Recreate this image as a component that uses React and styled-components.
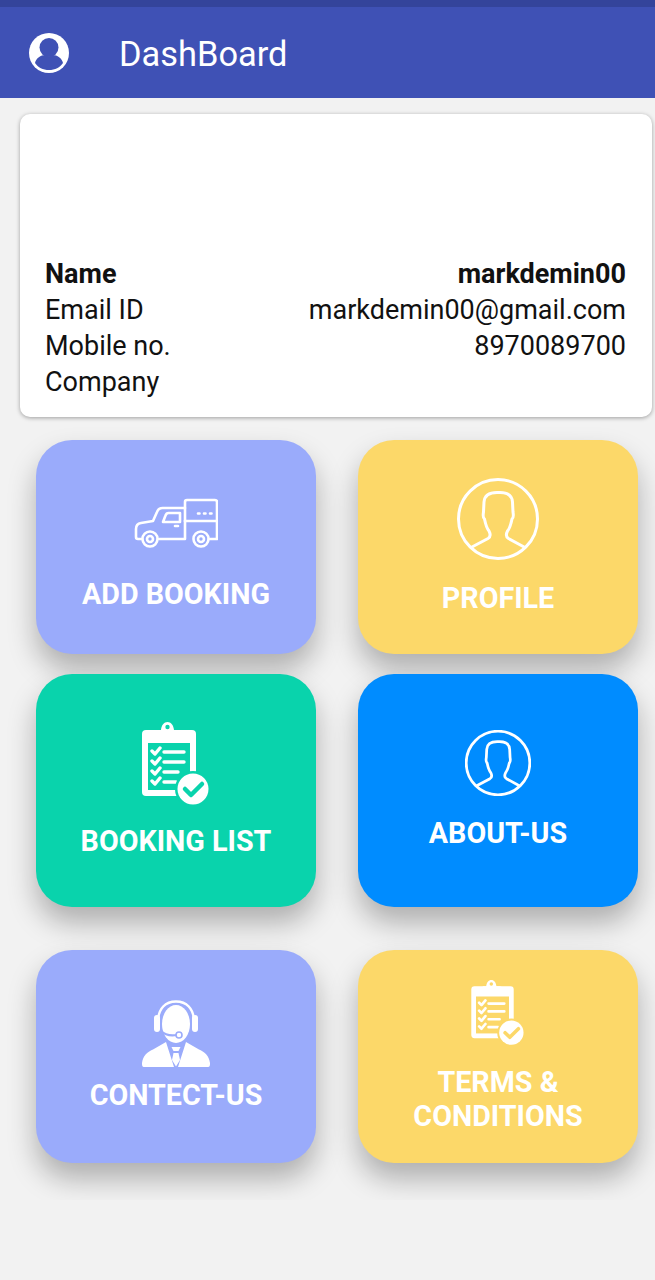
import React from 'react';
import styled, { createGlobalStyle } from 'styled-components';

const GlobalStyle = createGlobalStyle`
  html, body {
    margin: 0;
    padding: 0;
    background: #f2f2f2;
  }
  body {
    font-family: Roboto, "Liberation Sans", sans-serif;
  }
`;

const Page = styled.div`
  width: 655px;
  height: 1280px;
  overflow: hidden;
  background: #f2f2f2;
`;

const StatusBar = styled.div`
  height: 7px;
  background: #34449b;
`;

const AppBar = styled.header`
  height: 91px;
  display: flex;
  align-items: center;
  padding-left: 29px;
  gap: 50px;
  background: #3f51b5;
  color: #fff;
`;

const AppTitle = styled.h1`
  margin: 2px 0 0;
  font-size: 34.4px;
  font-weight: 400;
`;

const InfoCard = styled.section`
  box-sizing: border-box;
  width: 632px;
  height: 303px;
  margin: 16px 0 0 20px;
  padding: 142px 26px 0 25px;
  background: #fff;
  border-radius: 10px;
  box-shadow: 0 1px 4px rgba(0, 0, 0, 0.35);
`;

const InfoRow = styled.div`
  display: flex;
  justify-content: space-between;
  height: 36px;
  line-height: 36px;
  font-size: 27px;
  color: #111;
  font-weight: ${(p) => (p.$bold ? 700 : 400)};
`;

const TileArea = styled.div`
  height: 783px;
  padding: 23px 0 0 36px;
  box-sizing: border-box;
  overflow: hidden;
`;

const TileRow = styled.div`
  display: flex;
  gap: 42px;
  margin-bottom: ${(p) => p.$after}px;
`;

const Tile = styled.div`
  width: 280px;
  height: ${(p) => p.$height}px;
  border-radius: 36px;
  background: ${(p) => p.$color};
  box-shadow: 0 16px 28px rgba(0, 0, 0, 0.28);
  color: #fff;
  display: flex;
  flex-direction: column;
  align-items: center;
  padding-top: ${(p) => p.$top}px;
  box-sizing: border-box;
`;

const TileIcon = styled.svg`
  display: block;
  flex: none;
`;

const TileLabel = styled.div`
  margin-top: ${(p) => p.$gap}px;
  font-size: 28.7px;
  font-weight: 700;
  line-height: 34px;
  text-align: center;
  white-space: nowrap;
`;

const UserBadge = () => (
  <svg width="40" height="40" viewBox="0 0 40 40">
    <circle cx="20" cy="20" r="20" fill="#fff" />
    <circle cx="20" cy="14.500" r="9.500" fill="#3f51b5" />
    <path d="M6 30C7 25 12 22 16 22C17.500 23.500 22.500 23.500 24 22C28 22 33 25 34 30C31 34.500 26 37 20 37S9 34.500 6 30Z" fill="#3f51b5" />
  </svg>
);

const TruckIcon = () => (
  <TileIcon width="84" height="54" viewBox="0 0 84 54" fill="none" stroke="#fff" strokeWidth="2.600" strokeLinejoin="round" strokeLinecap="round">
    <path d="M8 41H4C2.800 41 2 40.200 2 39V31C2 28 4 25.500 7 25L19 23L23 14C24 11.500 26 10 28.500 10H51" />
    <path d="M51 23V4C51 2.800 51.800 2 53 2H81C82.200 2 83 2.800 83 4V41H75" />
    <path d="M51 23H83" />
    <path d="M51 23V41H25" />
    <path d="M29 24L31.500 17.500C32 16 33 15 34.500 15H46V24H29Z" />
    <path d="M41 28H44" />
    <circle cx="16" cy="41" r="7.500" />
    <circle cx="16" cy="41" r="3" />
    <circle cx="67" cy="41" r="7.500" />
    <circle cx="67" cy="41" r="3" />
    <path d="M64 15.500h1.500M70 15.500h1.500M76 15.500h1.500" />
  </TileIcon>
);

const PersonIcon = ({ size, stroke }) => (
  <TileIcon width={size} height={size} viewBox="0 0 82 82" fill="none" stroke="#fff" strokeWidth={stroke} strokeLinejoin="round">
    <circle cx="41" cy="41" r="39.500" />
    <path d="M14 69.500L31 60.500C33.500 59 33.500 56 32 53C29.500 50 28.500 46 27.500 41C26 40 26 37 26.500 34L27 24C27.500 17 32 14.500 40 14.500H43C51 14.500 55 17.500 55.500 24L56 34C56.500 37 56.500 40 55 41C54 46 53 50 50.500 53C49 56 49 59 51.500 60.500L68 69.500" />
  </TileIcon>
);

const ClipboardIcon = ({ width, height, accent }) => (
  <TileIcon width={width} height={height} viewBox="0 0 68 84">
    <rect x="0" y="8" width="54" height="66" rx="4" fill="#fff" />
    <path d="M14 14V10C14 8.500 15 8 16.500 8H19C19.500 3 22 0 25.500 0S31.500 3 32 8H36C38 8 39 9 39 10V14Z" fill="#fff" />
    <circle cx="25.500" cy="5" r="2.200" fill={accent} />
    <rect x="6" y="21" width="42" height="47" fill={accent} />
    <g fill="none" stroke="#fff" strokeWidth="3.400" strokeLinecap="round" strokeLinejoin="round">
      <path d="M10 29l3 3 5-6M10 39l3 3 5-6M10 49l3 3 5-6M10 59l3 3 5-6" />
      <path d="M22 30H42M22 40H42M22 50H36M22 60H34" />
    </g>
    <circle cx="51" cy="67" r="18" fill={accent} />
    <circle cx="51" cy="67" r="15.500" fill="#fff" />
    <path d="M43 67l6 6 11-11" fill="none" stroke={accent} strokeWidth="4.500" strokeLinecap="round" strokeLinejoin="round" />
  </TileIcon>
);

const AgentIcon = () => (
  <TileIcon width="68" height="68" viewBox="0 0 68 68">
    <path fill="none" stroke="#fff" strokeWidth="2.500" d="M16 22C16 8 24 1.500 34 1.500S52 8 52 22" />
    <rect x="12" y="15" width="6" height="17" rx="3" fill="#fff" />
    <rect x="50" y="15" width="6" height="17" rx="3" fill="#fff" />
    <ellipse cx="34" cy="24" rx="14" ry="19" fill="#fff" />
    <path d="M19 31C23 35 29 36 35 35" fill="none" stroke="#9aabfb" strokeWidth="2.200" strokeLinecap="round" />
    <circle cx="37" cy="35" r="3" fill="#fff" stroke="#9aabfb" strokeWidth="1.600" />
    <path fill="#fff" d="M24 42L32 67H2C0 67 0 65 0 63C1 56 5 52 11 49.500ZM44 42L36 67H66C68 67 68 65 68 63C67 56 63 52 57 49.500ZM29.500 47H38.500L36.500 51H31.500ZM31.500 53H36.500L38 60L34 66.500L30 60Z" />
  </TileIcon>
);

function App() {
  return (
    <Page>
      <GlobalStyle />
      <StatusBar />
      <AppBar>
        <UserBadge />
        <AppTitle>DashBoard</AppTitle>
      </AppBar>
      <InfoCard>
        <InfoRow $bold><span>Name</span><span>markdemin00</span></InfoRow>
        <InfoRow><span>Email ID</span><span>markdemin00@gmail.com</span></InfoRow>
        <InfoRow><span>Mobile no.</span><span>8970089700</span></InfoRow>
        <InfoRow><span>Company</span></InfoRow>
      </InfoCard>
      <TileArea>
        <TileRow $after={20}>
          <Tile $height={214} $color="#9aabfb" $top={58}>
            <TruckIcon />
            <TileLabel $gap={25}>ADD BOOKING</TileLabel>
          </Tile>
          <Tile $height={214} $color="#fcd869" $top={38}>
            <PersonIcon size={82} stroke={3} />
            <TileLabel $gap={21}>PROFILE</TileLabel>
          </Tile>
        </TileRow>
        <TileRow $after={43}>
          <Tile $height={233} $color="#09d3ac" $top={48}>
            <ClipboardIcon width={68} height={84} accent="#09d3ac" />
            <TileLabel $gap={18}>BOOKING LIST</TileLabel>
          </Tile>
          <Tile $height={233} $color="#008cff" $top={56}>
            <PersonIcon size={66} stroke={3.400} />
            <TileLabel $gap={20}>ABOUT-US</TileLabel>
          </Tile>
        </TileRow>
        <TileRow $after={0}>
          <Tile $height={213} $color="#9aabfb" $top={50}>
            <AgentIcon />
            <TileLabel $gap={10}>CONTECT-US</TileLabel>
          </Tile>
          <Tile $height={213} $color="#fcd869" $top={30}>
            <ClipboardIcon width={54} height={66} accent="#fcd869" />
            <TileLabel $gap={19}>TERMS &amp;<br />CONDITIONS</TileLabel>
          </Tile>
        </TileRow>
      </TileArea>
    </Page>
  );
}

export default App;
